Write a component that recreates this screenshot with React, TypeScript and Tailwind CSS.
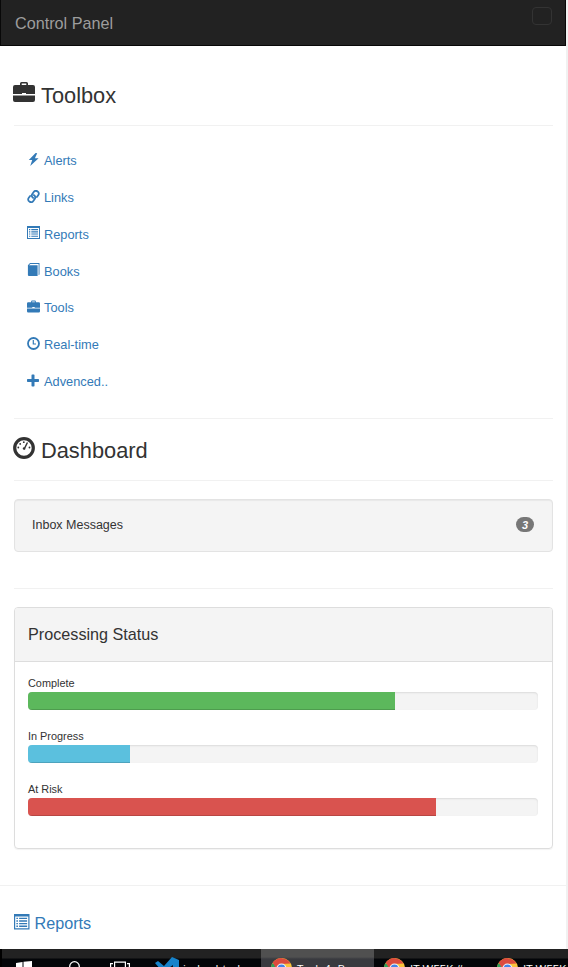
import type { ReactNode } from "react";

type IconProps = { className?: string };

const Briefcase = ({ className }: IconProps) => (
  <svg viewBox="0 0 22 20" className={className} fill="currentColor">
    <path fillRule="evenodd" d="M7 3V1.500Q7 0 8.500 0H13.500Q15 0 15 1.500V3H20Q22 3 22 5V12H13V11H9V12H0V5Q0 3 2 3ZM8.700 3H13.300V1.500H8.700ZM0 13.500H22V18Q22 20 20 20H2Q0 20 0 18Z" />
  </svg>
);

const Bolt = ({ className }: IconProps) => (
  <svg viewBox="0 0 13 13" className={className} fill="currentColor">
    <path d="M8.600 0 1.800 7H5.200L3.200 13 11.600 5.300H7.900L10.200.300Z" />
  </svg>
);

const Chain = ({ className }: IconProps) => (
  <svg viewBox="0 0 13 13" className={className} fill="none" stroke="currentColor" strokeWidth="1.800" strokeLinecap="round">
    <path d="M6.200 7.900C4.600 6.900 4.300 5.300 5.300 3.900L6.700 2C7.700.700 9.300.500 10.600 1.400 12 2.400 12.200 4 11.200 5.300L9.900 7" />
    <path d="M6.800 5.100C8.400 6.100 8.700 7.700 7.700 9.100L6.300 11C5.300 12.300 3.700 12.500 2.400 11.600 1 10.600.800 9 1.800 7.700L3.100 6" />
  </svg>
);

const ListBox = ({ className }: IconProps) => (
  <svg viewBox="0 0 13 13" className={className} fill="currentColor">
    <path fillRule="evenodd" d="M0 0H13V13H0ZM1 2V12H12V2Z" />
    <path d="M2 3.100H3.300V4.200H2ZM4.300 3.100H11V4.200H4.300ZM2 5.300H3.300V6.400H2ZM4.300 5.300H11V6.400H4.300ZM2 7.500H3.300V8.600H2ZM4.300 7.500H11V8.600H4.300ZM2 9.700H3.300V10.800H2ZM4.300 9.700H11V10.800H4.300Z" />
  </svg>
);

const Book = ({ className }: IconProps) => (
  <svg viewBox="0 0 13 13" className={className} fill="currentColor">
    <path d="M2 2.200H10.600V13H2Q.900 13 .900 12V2.200L3 0H12.500V11.500L11.600 12.300V1H3.400Z" />
  </svg>
);

const Clock = ({ className }: IconProps) => (
  <svg viewBox="0 0 13 13" className={className} fill="none" stroke="currentColor">
    <circle cx="6.500" cy="6.500" r="5.500" strokeWidth="1.800" />
    <path d="M6.300 3V7H9" strokeWidth="1.200" />
  </svg>
);

const Plus = ({ className }: IconProps) => (
  <svg viewBox="0 0 13 13" className={className} fill="currentColor">
    <path d="M4.500 1.200Q4.500.500 5.200.500H6.800Q7.500.500 7.500 1.200V5H11.300Q12 5 12 5.700V7.300Q12 8 11.300 8H7.500V11.800Q7.500 12.500 6.800 12.500H5.200Q4.500 12.500 4.500 11.800V8H.700Q0 8 0 7.300V5.700Q0 5 .700 5H4.500Z" />
  </svg>
);

const Gauge = ({ className }: IconProps) => (
  <svg viewBox="0 0 22 22" className={className} fill="currentColor">
    <circle cx="11" cy="11" r="9.300" fill="none" stroke="currentColor" strokeWidth="3.200" />
    <circle cx="5.300" cy="10.500" r=".9" />
    <circle cx="7.200" cy="6.900" r=".9" />
    <circle cx="10.800" cy="5.200" r=".9" />
    <circle cx="16.500" cy="10.500" r=".9" />
    <path d="m13.800 5.200 1.300.600-2.600 5.300q.300 1.600-1.300 1.800-1.700-.200-1.500-1.600.200-1.200 1.600-1.100Z" />
  </svg>
);

const Chrome = ({ className }: IconProps) => (
  <svg viewBox="0 0 22 22" className={className}>
    <circle cx="11" cy="11" r="11" fill="#f8c33a" />
    <path d="M11 11 1.500 5.500A11 11 0 0 0 11 22L15.800 13.500Z" fill="#2da45b" />
    <path d="M1.800 5A11 11 0 0 1 20.500 5.700L11 6.200 6.200 12Z" fill="#dc4b3e" />
    <circle cx="11" cy="11" r="5.300" fill="#f4f4f4" />
    <circle cx="11" cy="11" r="4.100" fill="#4285e8" />
  </svg>
);

const tools = [
  { label: "Alerts", Icon: Bolt },
  { label: "Links", Icon: Chain },
  { label: "Reports", Icon: ListBox },
  { label: "Books", Icon: Book },
  { label: "Tools", Icon: Briefcase },
  { label: "Real-time", Icon: Clock },
  { label: "Advenced..", Icon: Plus },
];

const statuses = [
  { label: "Complete", width: "w-[72%]", color: "bg-[#5cb85c]" },
  { label: "In Progress", width: "w-[20%]", color: "bg-[#5bc0de]" },
  { label: "At Risk", width: "w-[80%]", color: "bg-[#d9534f]" },
];

function Heading({ icon, children, className }: { icon: ReactNode; children: ReactNode; className: string }) {
  return (
    <h2 className={`flex gap-[6px] border-[#f1f1f1] border-b text-[21.8px] leading-[26px] text-[#333] ${className}`}>
      {icon}
      <span className="mt-px">{children}</span>
    </h2>
  );
}

function TaskItem({ label, className }: { label: string; className: string }) {
  return (
    <div className={`flex h-[18px] shrink-0 items-start overflow-hidden pl-[10px] ${className}`}>
      <Chrome className="mt-[9px] size-[21px] shrink-0" />
      <span className="mt-[11px] ml-[5px] whitespace-nowrap text-[11.5px] leading-[18px] text-white">{label}</span>
    </div>
  );
}

export default function App() {
  return (
    <div className="flex h-[967px] w-[568px] flex-col overflow-hidden bg-white font-['Liberation_Sans',Arial,sans-serif] text-[#333]">
      <div className="flex h-[949px] shrink-0">
        <main className="w-[566px]">
          <header className="flex h-[46px] items-start justify-between border-x border-b border-[#080808] bg-[#222] pl-[14px] pr-[13px]">
            <span className="mt-[13px] text-[16.2px] leading-5 text-[#9d9d9d]">Control Panel</span>
            <button aria-label="Menu" className="mt-[7px] h-[18px] w-5 rounded-[4px] border border-[#333]" />
          </header>

          <div className="pl-[14px] pr-[13px]">
            <Heading className="h-20 pt-9" icon={<Briefcase className="-ml-px h-5 w-[22px]" />}>Toolbox</Heading>

            <nav className="mt-4 h-[276px]">
              {tools.map(({ label, Icon }) => (
                <a key={label} href="#" className="flex h-[36.8px] items-center gap-[4px] pt-[1px] pl-[13px] text-[12.8px] text-[#337ab7]">
                  <Icon className="-mt-[3px] size-[13px]" />
                  <span>{label}</span>
                </a>
              ))}
            </nav>

            <Heading className="h-[63px] border-t pt-[18px]" icon={<Gauge className="-ml-px size-[22px]" />}>Dashboard</Heading>

            <div className="mt-[18px] flex h-[53px] items-center justify-between rounded-[4px] border border-[#e3e3e3] bg-[#f4f4f4] pl-[17px] pr-[18px] shadow-[inset_0_1px_1px_rgba(0,0,0,0.05)]">
              <span className="text-[12.5px]">Inbox Messages</span>
              <span className="-mt-[2px] flex h-[15px] w-[18px] items-center justify-center rounded-[9px] bg-[#777] pt-px text-[11px] leading-none font-bold text-white italic">3</span>
            </div>

            <hr className="mt-9 border-[#f1f1f1]" />

            <section className="mt-[18px] h-[242px] overflow-hidden rounded-[4px] border border-[#ddd] shadow-[0_1px_1px_rgba(0,0,0,0.05)]">
              <h3 className="flex h-[54px] items-center border-b border-[#ddd] bg-[#f4f4f4] pl-[13px] text-[16.2px]">Processing Status</h3>
              <div className="pt-[13px] pr-[14px] pl-[13px]">
                {statuses.map((s) => (
                  <div key={s.label} className="h-[53px]">
                    <div className="h-[17px] text-[10.9px] leading-[16px]">{s.label}</div>
                    <div className="h-[18px] overflow-hidden rounded-[4px] bg-[#f4f4f4] shadow-[inset_0_1px_2px_rgba(0,0,0,0.1)]">
                      <div className={`h-full shadow-[inset_0_-1px_0_rgba(0,0,0,0.15)] ${s.width} ${s.color}`} />
                    </div>
                  </div>
                ))}
              </div>
            </section>
          </div>

          <hr className="mt-[36px] border-[#f1f1f1]" />
          <a href="#" className="mt-[27px] flex gap-[5px] pl-[14px] text-[16.2px] leading-5 text-[#337ab7]">
            <ListBox className="mt-[1px] size-[15.500px]" />
            <span>Reports</span>
          </a>
        </main>
        <div className="w-[2px] bg-[#f1f1f1]" />
      </div>

      <footer className="flex h-[18px] shrink-0 items-start overflow-hidden border-l-2 border-black bg-[linear-gradient(#222_9px,#030508_10px)] font-['Open_Sans',sans-serif]">
        <svg viewBox="0 0 16 16" className="mt-3 ml-[14px] size-4 shrink-0" fill="#fff">
          <path d="M0 2 6.500 1V7.500H0ZM7.500.800 16 0V7.500H7.500Z" />
        </svg>
        <svg viewBox="0 0 12 12" className="mt-3 ml-9 size-3 shrink-0" fill="none" stroke="#fff" strokeWidth="1.3">
          <circle cx="6.500" cy="5.500" r="4.800" />
        </svg>
        <svg viewBox="0 0 20 16" className="mt-3 ml-[30px] h-4 w-5 shrink-0" fill="none" stroke="#fff" strokeWidth="1.200">
          <path d="M4.600 12V1.200H15.400V12M3 2.700H.600V12M17 2.700H19.400V12" />
        </svg>
        <svg viewBox="0 0 24 24" className="mt-2 ml-[25px] size-6 shrink-0">
          <path d="M0 6 3 4 9 9 17 0 24 3V22L18 24 10 16 3 21 0 19 6 13Z" fill="#1683cb" />
          <path d="M18 8V18L11 13Z" fill="#07101a" />
        </svg>
        <span className="mt-[11px] ml-[4px] w-[78px] shrink-0 whitespace-nowrap text-[11.5px] leading-[18px] text-white">index.html</span>
        <TaskItem label="Task 4- Bo" className="w-[113px] bg-[linear-gradient(#505050_8px,#393a3f_10px)]" />
        <TaskItem label="IT WEEK #" className="w-[113px]" />
        <TaskItem label="IT WEEK #" className="w-[81px]" />
      </footer>
    </div>
  );
}
